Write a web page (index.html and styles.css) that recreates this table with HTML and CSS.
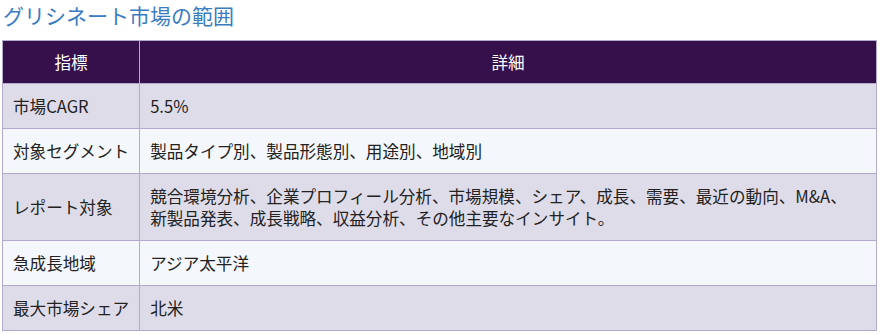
FILE: index.html
```html
<!DOCTYPE html>
<html lang="ja">
<head>
<meta charset="utf-8">
<link rel="stylesheet" href="styles.css">
</head>
<body>
<div class="page">
  <h2 class="title">グリシネート市場の範囲</h2>
  <table class="scope">
    <thead>
      <tr><th class="c1">指標</th><th>詳細</th></tr>
    </thead>
    <tbody>
      <tr class="odd"><td class="c1">市場CAGR</td><td>5.5%</td></tr>
      <tr class="even"><td class="c1">対象セグメント</td><td>製品タイプ別、製品形態別、用途別、地域別</td></tr>
      <tr class="odd"><td class="c1">レポート対象</td><td>競合環境分析、企業プロフィール分析、市場規模、シェア、成長、需要、最近の動向、M&amp;A、<br>新製品発表、成長戦略、収益分析、その他主要なインサイト。</td></tr>
      <tr class="even"><td class="c1">急成長地域</td><td>アジア太平洋</td></tr>
      <tr class="odd"><td class="c1">最大市場シェア</td><td>北米</td></tr>
    </tbody>
  </table>
</div>
</body>
</html>
```

FILE: styles.css
```css
html, body {
  margin: 0;
  padding: 0;
  background: #ffffff;
}
.page {
  padding: 0 7px 0 2px;
  font-family: "Noto Sans CJK JP", "Noto Sans", sans-serif;
}
.title {
  margin: 0;
  padding: 1px 0 0 1px;
  height: 40px;
  box-sizing: border-box;
  font-size: 21px;
  line-height: 28px;
  font-weight: normal;
  color: #3a7cc2;
}
.scope {
  width: 875px;
  border-collapse: collapse;
  font-size: 16.6px;
  color: #222222;
}
.scope th, .scope td {
  border: 1px solid #b3aacb;
  line-height: 22px;
  text-align: left;
  padding: 11px 10px 11px 10px;
  vertical-align: middle;
}
.scope th {
  background: #36104a;
  color: #ffffff;
  font-weight: normal;
  text-align: center;
  padding: 10px;
}
.scope .c1 {
  width: 116px;
  white-space: nowrap;
}
.odd td {
  background: #dfdcea;
}
.even td {
  background: #f4f7fb;
}
```
